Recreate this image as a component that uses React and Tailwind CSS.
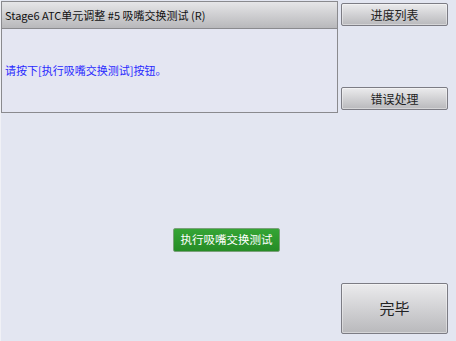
export default function App() {
  const font = { fontFamily: '"Noto Sans CJK SC", "Noto Sans", sans-serif' };
  const grayBtn =
    "flex items-center justify-center rounded-[2px] border border-[#7c7c84] bg-gradient-to-b from-[#ebebed] to-[#b9b9bc] text-[#222] shadow-[0_0_0_1px_rgba(255,255,255,0.4)_inset]";
  return (
    <div
      className="w-[456px] h-[341px] bg-[#e3e6f1] border-l border-[#f0f1f6] flex flex-col overflow-hidden"
      style={font}
    >
      <div className="flex items-start">
        <div className="mt-[1px] w-[337px] h-[112px] border border-[#8a8a8e] flex flex-col bg-[#e4e6f2]">
          <div className="h-[27px] border-b border-[#8a8a8e] bg-gradient-to-b from-[#e6e6e8] to-[#b8b8bb] flex items-center pl-[3px] text-[11px] text-[#111] leading-none">
            Stage6 ATC单元调整 #5 吸嘴交换测试 (R)
          </div>
          <div className="flex-1 flex items-center pl-[3px] text-[11px] text-[#2a2aff] leading-none pb-[1px]">
            请按下[执行吸嘴交换测试]按钮。
          </div>
        </div>
        <div className="ml-[3px] mt-[3px] w-[107px] flex flex-col">
          <div className={grayBtn + " h-[23px] text-[12px]"}>进度列表</div>
          <div className={grayBtn + " h-[23px] text-[12px] mt-[61px]"}>错误处理</div>
        </div>
      </div>
      <div className="mt-[115px] ml-[172px] w-[107px] h-[24px] rounded-[2px] border border-[#7aa07a] bg-gradient-to-b from-[#35a535] to-[#268c26] flex items-center justify-center text-white text-[11.5px] leading-none">
        执行吸嘴交换测试
      </div>
      <div className={grayBtn + " mt-[31px] ml-[340px] w-[107px] h-[51px] text-[15px]"}>完毕</div>
    </div>
  );
}
